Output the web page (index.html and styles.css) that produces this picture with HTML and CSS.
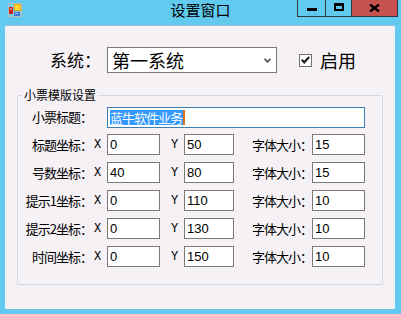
FILE: index.html
```html
<!DOCTYPE html>
<html lang="zh">
<head>
  <meta charset="UTF-8">
  <title>设置窗口</title>
  <link rel="stylesheet" href="styles.css">
</head>
<body>

<div class="window">
  <!-- 标题栏 -->
  <div class="titlebar">
    <svg class="app-icon" width="14" height="14" viewBox="0 0 14 14">
      <rect x="0.5" y="0.5" width="13" height="13" fill="none" stroke="#b9b9b9"/>
      <line x1="0" y1="4.5" x2="14" y2="4.5" stroke="#c8c8c8"/>
      <line x1="0" y1="9.5" x2="14" y2="9.5" stroke="#c8c8c8"/>
      <line x1="4.5" y1="0" x2="4.5" y2="14" stroke="#c8c8c8"/>
      <line x1="9.5" y1="0" x2="9.5" y2="14" stroke="#c8c8c8"/>
      <rect x="1" y="4" width="4" height="7" fill="#c8231c"/>
      <rect x="2" y="5" width="2" height="2" fill="#f07a6a"/>
      <rect x="6" y="1" width="7" height="7" fill="#e8a800"/>
      <rect x="7" y="2" width="5" height="5" fill="#ffd83a"/>
      <rect x="6" y="9" width="6" height="4" fill="#3f78d8"/>
      <rect x="7" y="10" width="3" height="1" fill="#9cc2f5"/>
    </svg>
    <div class="title">设置窗口</div>
    <div class="caption">
      <div class="cap cap-min"><span class="min-bar"></span></div>
      <div class="cap cap-max"><span class="max-box"></span></div>
      <div class="cap cap-close">
        <svg width="11" height="8" viewBox="0 0 11 8">
          <path d="M1 0.5 L10 7.5 M10 0.5 L1 7.5" stroke="#000" stroke-width="2.4"/>
        </svg>
      </div>
    </div>
  </div>

  <!-- 窗体内容 -->
  <div class="client">
    <div class="sys-row">
      <span class="sys-label">系统：</span>
      <div class="combo">
        <span>第一系统</span>
        <svg width="7" height="5" viewBox="0 0 7 5">
          <polyline points="0.5,0.8 3.5,3.8 6.5,0.8" fill="none" stroke="#555" stroke-width="1.8"/>
        </svg>
      </div>
      <label class="check">
        <span class="check-box">
          <svg width="9" height="8" viewBox="0 0 9 8">
            <polyline points="0.8,3.8 3.2,6.3 8.2,1" fill="none" stroke="#222" stroke-width="2.2"/>
          </svg>
        </span>
        启用
      </label>
    </div>

    <fieldset class="group">
      <legend>小票模版设置</legend>
      <div class="grid">
        <span class="lbl">小票标题：</span>
        <div class="title-box"><span class="selected">蓝牛软件业务</span><span class="caret"></span></div>

        <span class="lbl">标题坐标：</span><span class="axis">X</span><input class="num" type="text" value="0">
        <span class="axis axis-y">Y</span><input class="num" type="text" value="50">
        <span class="lbl">字体大小：</span><input class="num" type="text" value="15">

        <span class="lbl">号数坐标：</span><span class="axis">X</span><input class="num" type="text" value="40">
        <span class="axis axis-y">Y</span><input class="num" type="text" value="80">
        <span class="lbl">字体大小：</span><input class="num" type="text" value="15">

        <span class="lbl">提示1坐标：</span><span class="axis">X</span><input class="num" type="text" value="0">
        <span class="axis axis-y">Y</span><input class="num" type="text" value="110">
        <span class="lbl">字体大小：</span><input class="num" type="text" value="10">

        <span class="lbl">提示2坐标：</span><span class="axis">X</span><input class="num" type="text" value="0">
        <span class="axis axis-y">Y</span><input class="num" type="text" value="130">
        <span class="lbl">字体大小：</span><input class="num" type="text" value="10">

        <span class="lbl">时间坐标：</span><span class="axis">X</span><input class="num" type="text" value="0">
        <span class="axis axis-y">Y</span><input class="num" type="text" value="150">
        <span class="lbl">字体大小：</span><input class="num" type="text" value="10">
      </div>
    </fieldset>
  </div>
</div>

</body>
</html>
```

FILE: styles.css
```css
body {
  margin: 0; width: 401px; height: 314px; overflow: hidden;
  background: #62c9ef; color: #000;
  font-family: "Noto Sans CJK SC", sans-serif;
}
.window { height: 314px; display: flex; flex-direction: column; }

/* 标题栏 */
.titlebar { height: 25px; display: grid; grid-template-columns: 1fr auto 1fr; align-items: start; }
.app-icon { margin: 3px 0 0 8px; display: block; }
.title { font-size: 15px; line-height: 20px; }
.caption {
  justify-self: end; display: flex; margin-right: 3px;
  height: 16px; border: 1px solid #2e3a40; border-top: 0;
}
.cap { display: flex; align-items: center; justify-content: center; }
.cap-min { width: 27px; }
.cap-max { width: 25px; border-left: 1px solid #2e3a40; }
.cap-close { width: 45px; border-left: 1px solid #2e3a40; background: #c75050; }
.min-bar { width: 10px; height: 3px; background: #000; margin-top: 3px; }
.max-box { width: 10px; height: 8px; box-sizing: border-box; border: 2px solid #000; border-top-width: 3px; margin-top: -2px; }
.cap-close svg { margin-top: -1px; }

/* 窗体 */
.client {
  flex: 1; margin: 0 6px 5px 5px;
  background: #f5f1f5; border-top: 1px solid #a6bdcb;
}
.sys-row { display: flex; align-items: center; height: 26px; margin: 21px 0 0 45px; }
.sys-label { width: 57px; font-size: 17px; line-height: 26px; }
.combo {
  width: 170px; height: 26px; box-sizing: border-box;
  border: 1px solid #7a7a7a; background: #fff;
  display: flex; align-items: center; justify-content: space-between;
  padding: 0 5px 0 4px; font-size: 18px; line-height: 24px;
}
.check { display: flex; align-items: center; margin-left: 22px; font-size: 18px; gap: 8px; }
.check-box {
  width: 13px; height: 13px; box-sizing: border-box;
  border: 1px solid #707070; background: #fff;
  display: flex; align-items: center; justify-content: center;
}

/* 分组 */
.group {
  margin: 15px 0 0 12px; padding: 5px 0 17px 0;
  width: 366px; box-sizing: border-box;
  border: 1px solid #d0dae2; border-radius: 2px;
}
.group legend { font-size: 12px; line-height: 14px; padding: 0 2px; margin-left: 4px; }
.grid {
  display: grid; align-items: center; row-gap: 7px;
  grid-template-columns: 74px 15px 53px 24px 50px 78px 53px;
  grid-template-rows: 20px repeat(5, 21px);
}
.lbl { text-align: right; font-size: 13px; letter-spacing: -1px; line-height: 16px; }
.axis { font-family: "Liberation Mono", monospace; font-size: 12px; padding-left: 2px; }
.axis-y { padding-left: 11px; }
.num {
  display: block; width: 100%; height: 21px; box-sizing: border-box; margin: 0;
  border: 1px solid #7a7a7a; background: #fff; padding: 0 2px; outline: none;
  font-family: "Liberation Sans", sans-serif; font-size: 13px; color: #000;
}
.title-box {
  grid-column: 3 / 8; height: 21px; box-sizing: border-box;
  border: 1px solid #3c7fb1; background: #fff; padding-left: 2px;
  display: flex; align-items: center;
}
.selected { background: #3399ff; color: #fff; font-size: 13px; letter-spacing: -1px; line-height: 15px; padding-right: 1px; }
.caret { width: 2px; height: 15px; background: #e0701a; }
```
